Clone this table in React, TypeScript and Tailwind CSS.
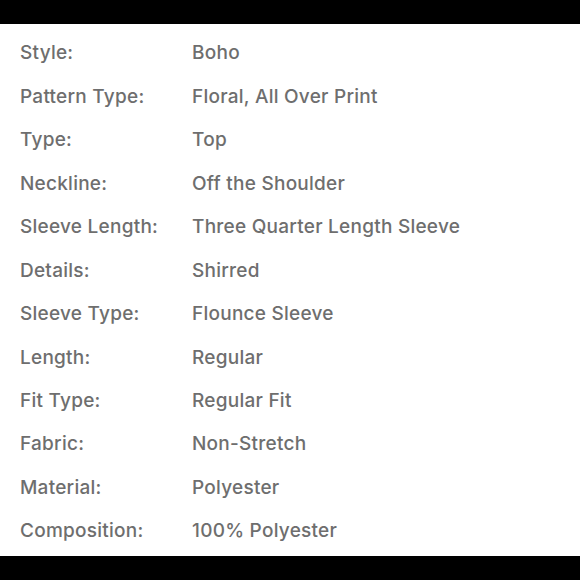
const specs: [string, string][] = [
  ['Style:', 'Boho'],
  ['Pattern Type:', 'Floral, All Over Print'],
  ['Type:', 'Top'],
  ['Neckline:', 'Off the Shoulder'],
  ['Sleeve Length:', 'Three Quarter Length Sleeve'],
  ['Details:', 'Shirred'],
  ['Sleeve Type:', 'Flounce Sleeve'],
  ['Length:', 'Regular'],
  ['Fit Type:', 'Regular Fit'],
  ['Fabric:', 'Non-Stretch'],
  ['Material:', 'Polyester'],
  ['Composition:', '100% Polyester'],
];

export default function App() {
  return (
    <div className="flex h-[580px] w-[580px] flex-col bg-black">
      <div className="h-[24px]" />
      <div className="flex flex-col bg-white pt-[8px] pb-[3px] font-['Inter',sans-serif] text-[19px] font-medium tracking-[0.25px] text-[#6e6e6e]">
        {specs.map(([label, value]) => (
          <div key={label} className="flex h-[43.45px] items-center">
            <span className="w-[192px] pl-[20px]">{label}</span>
            <span>{value}</span>
          </div>
        ))}
      </div>
    </div>
  );
}
